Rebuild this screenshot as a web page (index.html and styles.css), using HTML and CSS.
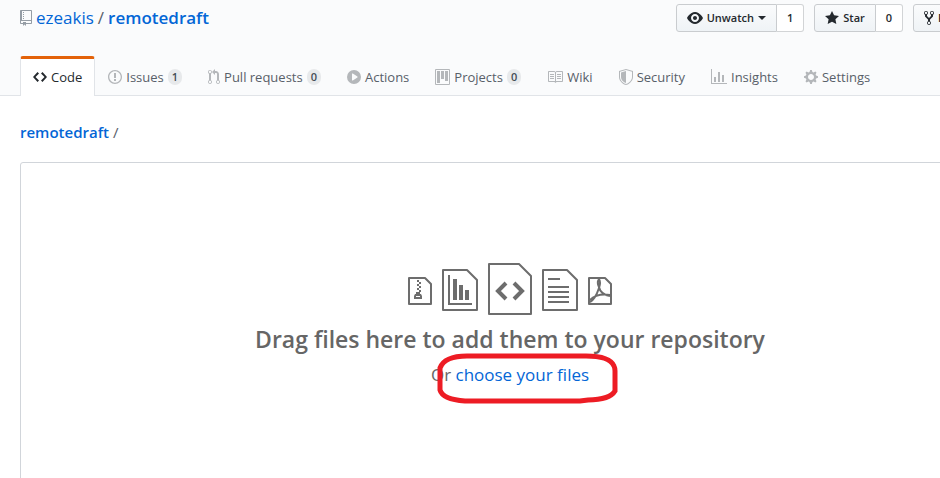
FILE: index.html
```html
<!DOCTYPE html>
<html lang="en">
<head>
<meta charset="utf-8">
<title>ezeakis/remotedraft</title>
<link rel="stylesheet" href="styles.css">
</head>
<body>
<header class="pagehead">
  <div class="container titlebar">
    <h1 class="repo-title">
      <svg class="octicon" width="12" height="16" viewBox="0 0 12 16" aria-hidden="true"><path d="M4 9H3V8h1v1zm0-3H3v1h1V6zm0-2H3v1h1V4zm0-2H3v1h1V2zm8-1v12c0 .55-.45 1-1 1H6v2l-1.5-1.5L3 16v-2H1c-.55 0-1-.45-1-1V1c0-.55.45-1 1-1h10c.55 0 1 .45 1 1zm-1 10H1v2h2v-1h3v1h5v-2zm0-10H2v9h9V1z"/></svg>
      <a href="#">ezeakis</a><span class="divider">/</span><a class="repo-name" href="#">remotedraft</a>
    </h1>
    <ul class="actions">
      <li class="action">
        <button class="btn" type="button">
          <svg class="octicon" width="16" height="16" viewBox="0 0 16 16" aria-hidden="true"><path d="M8.06 2C3 2 0 8 0 8s3 6 8.06 6C13 14 16 8 16 8s-3-6-7.94-6zM8 12c-2.2 0-4-1.78-4-4 0-2.2 1.8-4 4-4 2.22 0 4 1.8 4 4 0 2.22-1.78 4-4 4zm2-4c0 1.11-.89 2-2 2-1.11 0-2-.89-2-2 0-1.11.89-2 2-2 1.11 0 2 .89 2 2z"/></svg>
          Unwatch<span class="caret"></span>
        </button><a class="count" href="#">1</a>
      </li>
      <li class="action">
        <button class="btn" type="button">
          <svg class="octicon" width="14" height="16" viewBox="0 0 14 16" aria-hidden="true"><path d="M14 6l-4.9-.64L7 1 4.9 5.36 0 6l3.6 3.26L2.67 14 7 11.67 11.33 14l-.93-4.74L14 6z"/></svg>
          Star
        </button><a class="count" href="#">0</a>
      </li>
      <li class="action">
        <button class="btn" type="button">
          <svg class="octicon" width="10" height="16" viewBox="0 0 10 16" aria-hidden="true"><path d="M8 1a1.993 1.993 0 0 0-1 3.72V6L5 8 3 6V4.72A1.993 1.993 0 0 0 2 1a1.993 1.993 0 0 0-1 3.72V6.5l3 3v1.78A1.993 1.993 0 0 0 5 15a1.993 1.993 0 0 0 1-3.72V9.5l3-3V4.72A1.993 1.993 0 0 0 8 1zM2 4.2C1.34 4.2.8 3.65.8 3c0-.65.55-1.2 1.2-1.2.65 0 1.2.55 1.2 1.2 0 .65-.55 1.2-1.2 1.2zm3 10c-.66 0-1.2-.55-1.2-1.2 0-.65.55-1.2 1.2-1.2.65 0 1.2.55 1.2 1.2 0 .65-.55 1.2-1.2 1.2zm3-10c-.66 0-1.2-.55-1.2-1.2 0-.65.55-1.2 1.2-1.2.65 0 1.2.55 1.2 1.2 0 .65-.55 1.2-1.2 1.2z"/></svg>
          Fork
        </button><a class="count" href="#">0</a>
      </li>
    </ul>
  </div>
  <nav class="container reponav" aria-label="Repository">
    <a class="tab selected" href="#"><svg class="octicon" width="14" height="16" viewBox="0 0 14 16" aria-hidden="true"><path d="M9.5 3L8 4.5 11.5 8 8 11.5 9.5 13 14 8 9.5 3zm-5 0L0 8l4.5 5L6 11.5 2.5 8 6 4.5 4.5 3z"/></svg>Code</a>
    <a class="tab" href="#"><svg class="octicon" width="14" height="16" viewBox="0 0 14 16" aria-hidden="true"><path d="M7 2.3c3.14 0 5.7 2.56 5.7 5.7s-2.56 5.7-5.7 5.7A5.71 5.71 0 0 1 1.3 8c0-3.14 2.56-5.7 5.7-5.7zM7 1C3.14 1 0 4.14 0 8s3.14 7 7 7 7-3.14 7-7-3.14-7-7-7zm1 3H6v5h2V4zm0 6H6v2h2v-2z"/></svg>Issues<span class="counter">1</span></a>
    <a class="tab" href="#"><svg class="octicon" width="12" height="16" viewBox="0 0 12 16" aria-hidden="true"><path d="M11 11.28V5c-.03-.78-.34-1.47-.94-2.06C9.46 2.35 8.78 2.03 8 2H7V0L4 3l3 3V4h1c.27.02.48.11.69.31.21.2.3.42.31.69v6.28A1.993 1.993 0 0 0 10 15a1.993 1.993 0 0 0 1-3.72zm-1 2.92c-.66 0-1.2-.55-1.2-1.2 0-.65.55-1.2 1.2-1.2.65 0 1.2.55 1.2 1.2 0 .65-.55 1.2-1.2 1.2zM4 3c0-1.11-.89-2-2-2a1.993 1.993 0 0 0-1 3.72v6.56A1.993 1.993 0 0 0 2 15a1.993 1.993 0 0 0 1-3.72V4.72c.59-.34 1-.98 1-1.72zm-.8 10c0 .66-.55 1.2-1.2 1.2-.65 0-1.2-.55-1.2-1.2 0-.65.55-1.2 1.2-1.2.65 0 1.2.55 1.2 1.2zM2 4.2C1.34 4.2.8 3.65.8 3c0-.65.55-1.2 1.2-1.2.65 0 1.2.55 1.2 1.2 0 .65-.55 1.2-1.2 1.2z"/></svg>Pull requests<span class="counter">0</span></a>
    <a class="tab" href="#"><svg class="octicon" width="14" height="16" viewBox="0 0 14 16" aria-hidden="true"><path fill-rule="evenodd" d="M14 8A7 7 0 1 1 0 8a7 7 0 0 1 14 0zm-8.223 3.482l4.599-3.066a.5.5 0 0 0 0-.832L5.777 4.518A.5.5 0 0 0 5 4.934v6.132a.5.5 0 0 0 .777.416z"/></svg>Actions</a>
    <a class="tab" href="#"><svg class="octicon" width="15" height="16" viewBox="0 0 15 16" aria-hidden="true"><path fill-rule="evenodd" d="M10 12h3V2h-3v10zm-4-2h3V2H6v8zm-4 4h3V2H2v12zm-1 1h13V1H1v14zM14 0H1a1 1 0 0 0-1 1v14a1 1 0 0 0 1 1h13a1 1 0 0 0 1-1V1a1 1 0 0 0-1-1z"/></svg>Projects<span class="counter">0</span></a>
    <a class="tab" href="#"><svg class="octicon" width="16" height="16" viewBox="0 0 16 16" aria-hidden="true"><path fill-rule="evenodd" d="M3 5h4v1H3V5zm0 3h4V7H3v1zm0 2h4V9H3v1zm11-5h-4v1h4V5zm0 2h-4v1h4V7zm0 2h-4v1h4V9zm2-6v9c0 .55-.45 1-1 1H9.5l-1 1-1-1H2c-.55 0-1-.45-1-1V3c0-.55.45-1 1-1h5.5l1 1 1-1H15c.55 0 1 .45 1 1zm-8 .5L7.5 3H2v9h6V3.5zm7-.5H9.5l-.5.5V12h6V3z"/></svg>Wiki</a>
    <a class="tab" href="#"><svg class="octicon" width="14" height="16" viewBox="0 0 14 16" aria-hidden="true"><path fill-rule="evenodd" d="M0 2l7-2 7 2v6.02C14 12.69 8.69 16 7 16c-1.69 0-7-3.31-7-7.98V2zm1 .75L7 1l6 1.75v5.268C13 12.104 8.449 15 7 15c-1.449 0-6-2.896-6-6.982V2.75zm1 .75L7 2v12c-1.207 0-5-2.482-5-5.985V3.5z"/></svg>Security</a>
    <a class="tab" href="#"><svg class="octicon" width="16" height="16" viewBox="0 0 16 16" aria-hidden="true"><path d="M16 14v1H0V0h1v14h15zM5 13H3V8h2v5zm4 0H7V3h2v10zm4 0h-2V6h2v7z"/></svg>Insights</a>
    <a class="tab" href="#"><svg class="octicon" width="14" height="16" viewBox="0 0 14 16" aria-hidden="true"><path fill-rule="evenodd" d="M14 8.77v-1.6l-1.94-.64-.45-1.09.88-1.84-1.13-1.13-1.81.91-1.09-.45-.69-1.92h-1.6l-.63 1.94-1.11.45-1.84-.88-1.13 1.13.91 1.81-.45 1.09L0 7.23v1.59l1.94.64.45 1.09-.88 1.84 1.13 1.13 1.81-.91 1.09.45.69 1.92h1.59l.63-1.94 1.11-.45 1.84.88 1.13-1.13-.92-1.81.47-1.09L14 8.75v.02zM7 11c-1.66 0-3-1.34-3-3s1.34-3 3-3 3 1.34 3 3-1.34 3-3 3z"/></svg>Settings</a>
  </nav>
</header>
<main class="container">
  <div class="breadcrumb"><a href="#">remotedraft</a><span>/</span></div>
  <section class="dropzone">
    <div class="file-icons" aria-hidden="true">
      <svg class="file-small" width="24" height="28" viewBox="0 0 24 28"><path class="line" d="M1 1h16l6 6v20H1z"/><path d="M9 3h2v2H9zM11 5h2v2h-2zM9 7h2v2H9zM11 9h2v2h-2zM9 11h2v2H9zM11 13h2v2h-2z"/><path fill-rule="evenodd" d="M8 15h4v2h1l1 2v3H6v-3l1-2h1zM8 19v1h4v-1z"/></svg>
      <svg class="file-medium" width="36" height="42" viewBox="0 0 36 42"><path class="line" d="M1 1h24l10 10v30H1z"/><path d="M6 6h2v28h22v2H6zM11 10h4v21h-4zM17 16h4v15h-4zM23 21h4v10h-4z"/></svg>
      <svg width="44" height="52" viewBox="0 0 44 52"><path class="line" d="M1 1h30l12 12v38H1z"/><path class="bracket" d="M18 20l-8 8 8 8M26 20l8 8-8 8"/></svg>
      <svg class="file-medium" width="36" height="42" viewBox="0 0 36 42"><path class="line" d="M1 1h24l10 10v30H1z"/><path d="M6 9h12v2H6zM6 17h21v2H6zM6 22h21v2H6zM6 27h21v2H6zM6 32h21v2H6z"/></svg>
      <svg class="file-small" width="24" height="28" viewBox="0 0 24 28"><path class="line" d="M1 1h16l6 6v20H1z"/><path class="loop" d="M11 2c-2 3-1 6 0 8 1 5 5 8 11 9M11 2c2 3 1 6 0 9C9 17 6 23 2 25M2 23c5-5 13-6 20-5"/></svg>
    </div>
    <h2 class="drop-title">Drag files here to add them to your repository</h2>
    <p class="choose">Or <a href="#">choose your files</a>
      <svg class="marker" width="182" height="52" viewBox="0 0 182 52" aria-hidden="true"><path d="M30 3h119c16 0 25 3 28 10q1 2 1 5v20c-3 5-12 9-27 9l-8 1H28C14 47 5 44 3 37V15C6 7 15 3 30 3z"/></svg>
    </p>
  </section>
</main>
</body>
</html>
```
FILE: styles.css
```css
* { box-sizing: border-box; }

body {
  margin: 0;
  overflow: hidden;
  background: #fff;
  color: #24292e;
  font: 14px/20px "Open Sans", "Noto Sans", sans-serif;
}

a { color: #0366d6; text-decoration: none; }
.octicon { fill: currentColor; flex: none; }

.container { min-width: 980px; margin: 0 20px; }

.pagehead {
  min-width: 1020px;
  background: #fafbfc;
  box-shadow: inset 0 -1px #e1e4e8;
}

.titlebar {
  display: flex;
  justify-content: space-between;
  align-items: flex-start;
  padding: 4px 0 24px;
}

.repo-title {
  display: flex;
  align-items: center;
  margin: 0;
  color: #586069;
  font-size: 17px;
  font-weight: 400;
  line-height: 28px;
}
.repo-title .octicon { margin-right: 4px; color: #959da5; }
.divider { margin: 0 4px; }
.repo-name { font-weight: 600; }

.actions { display: flex; gap: 10px; margin: 0; padding: 0; list-style: none; }
.action { display: flex; }
.btn {
  display: flex;
  align-items: center;
  gap: 4px;
  height: 28px;
  padding: 0 10px;
  border: 1px solid #c9cccf;
  border-radius: 3px 0 0 3px;
  background: linear-gradient(#fafbfc, #eff3f6);
  color: #24292e;
  font: 600 11px/20px "Open Sans", sans-serif;
}
.caret {
  border: 4px solid transparent;
  border-top-color: currentColor;
  border-bottom: 0;
}
.count {
  height: 28px;
  padding: 0 10px;
  border: 1px solid #d2d4d6;
  border-left: 0;
  border-radius: 0 3px 3px 0;
  background: #fff;
  color: #24292e;
  font: 600 11px/26px "Open Sans", sans-serif;
}

.reponav { display: flex; }
.tab {
  display: flex;
  align-items: center;
  height: 40px;
  padding: 0 12px 1px;
  border: 1px solid transparent;
  border-top-width: 3px;
  border-bottom: 0;
  color: #586069;
  font-size: 13px;
}
.tab .octicon { margin-right: 4px; color: #b4b7ba; }
.selected {
  border-color: #e36209 #e1e4e8 transparent;
  border-radius: 3px 3px 0 0;
  background: #fff;
  color: #24292e;
}
.selected .octicon { color: #24292e; }
.counter {
  margin-left: 4px;
  padding: 0 4px;
  border-radius: 8px;
  background: #e7e9eb;
  color: #444d56;
  font-size: 11px;
  font-weight: 600;
  line-height: 16px;
}

.breadcrumb {
  display: flex;
  gap: 4px;
  padding: 26px 0 20px;
  color: #586069;
  font-size: 15px;
}
.breadcrumb a { font-weight: 600; }

.dropzone {
  padding: 100px 0;
  border: 1px solid #d1d5da;
  border-radius: 3px;
  color: #666;
  text-align: center;
}
.file-icons {
  display: flex;
  justify-content: center;
  align-items: center;
  gap: 10px;
  fill: #6d6d6d;
}
.file-small { margin-top: 4px; }
.file-medium { margin-top: 2px; }
.line, .bracket, .loop { fill: none; stroke: #6d6d6d; stroke-width: 2; stroke-linejoin: round; }
.bracket { stroke-width: 4; stroke-linejoin: miter; }
.drop-title {
  margin: 8px 0 4px;
  font-size: 23px;
  font-weight: 600;
  line-height: 32px;
}
.choose { position: relative; margin: 0; font-size: 17px; line-height: 32px; }
.marker {
  position: absolute;
  top: -6px;
  left: calc(50% - 73px);
  fill: none;
  stroke: #ed1c24;
  stroke-width: 5;
}
```
